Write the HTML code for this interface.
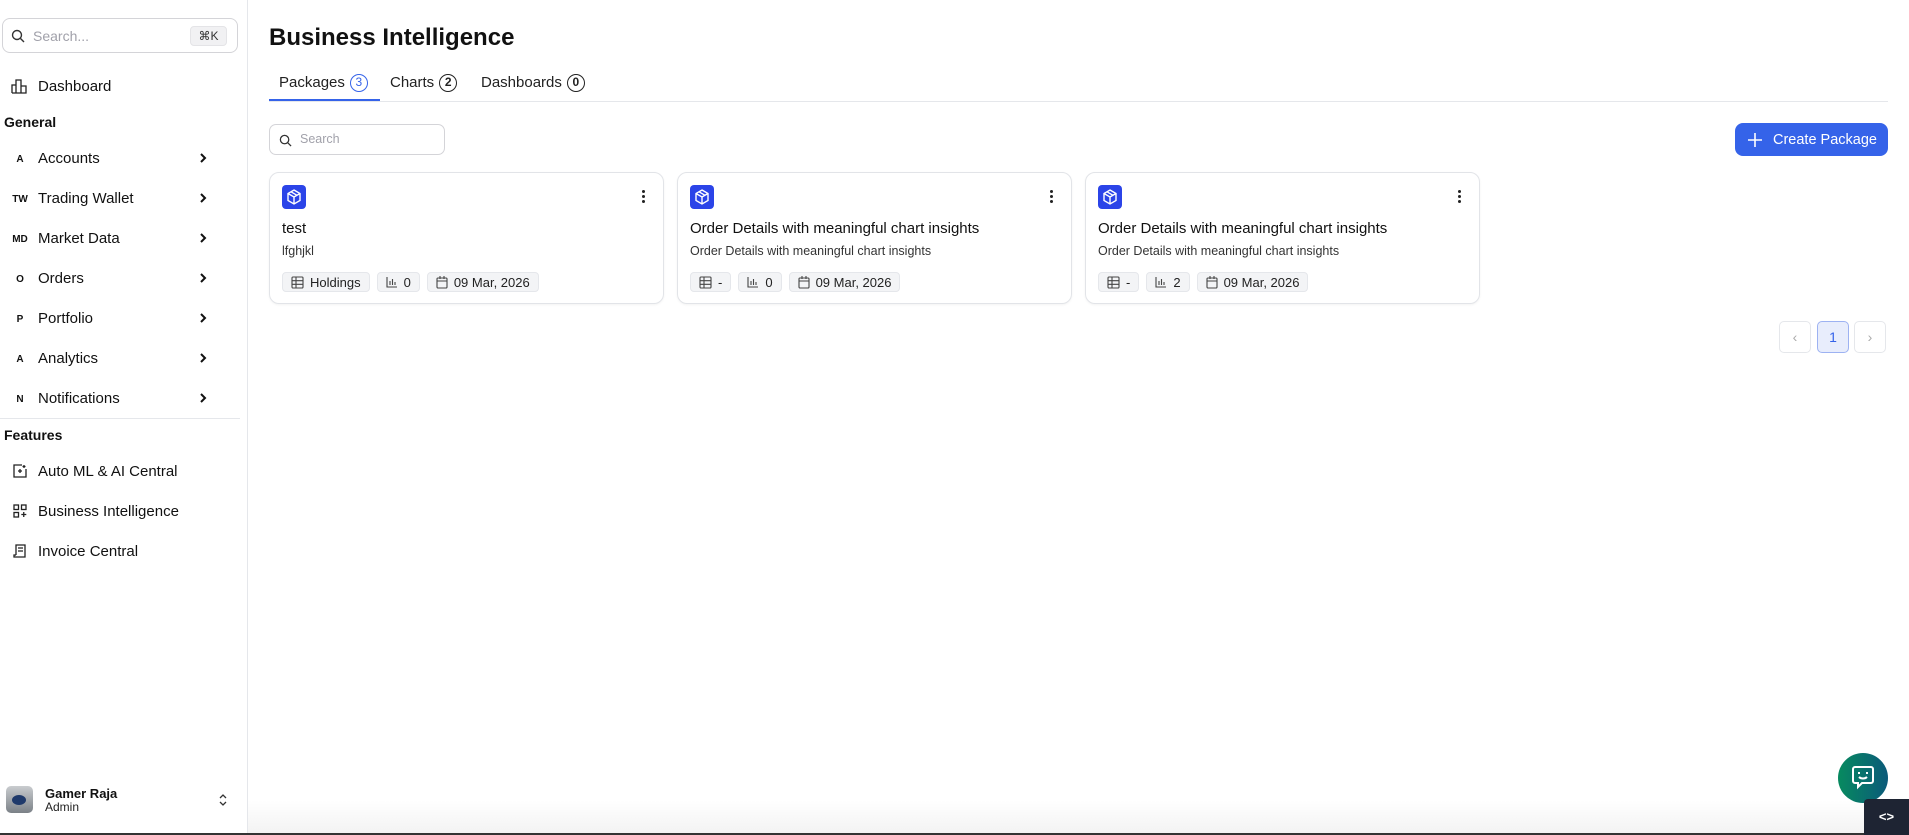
<!DOCTYPE html>
<html><head><meta charset="utf-8"><style>
*{box-sizing:border-box;margin:0;padding:0}
body{width:1909px;height:835px;overflow:hidden;background:#fff;font-family:"Liberation Sans",sans-serif;color:#111;position:relative}
.sb{position:absolute;left:0;top:0;width:248px;height:835px;border-right:1px solid #e5e7eb}
.abs{position:absolute}
.srch{left:2px;top:18px;width:236px;height:35px;border:1px solid #d4d4d8;border-radius:8px}
.kbd{position:absolute;right:10px;top:7px;width:37px;height:20px;background:#f1f1f3;border:1px solid #e4e4e7;border-radius:4px;font-size:12px;color:#333;text-align:center;line-height:18px}
.item{position:absolute;left:0;width:240px;height:30px;font-size:15px;color:#111}
.item .ic{position:absolute;left:10px;top:11px;font-size:10px;font-weight:bold;width:20px;text-align:center}
.item .t{position:absolute;left:38px;top:7px}
.item .ch{position:absolute;left:199px;top:8px}
.hd{position:absolute;left:4px;font-size:14px;font-weight:bold}
.tab{position:absolute;top:74px;font-size:15px;color:#222}
.bdg{display:inline-block;min-width:18px;height:18px;border:1.5px solid #222;border-radius:9px;font-size:12px;text-align:center;line-height:15px;margin-left:5px;font-weight:bold;padding:0 4px;vertical-align:1px}
.card{position:absolute;top:172px;width:395px;height:132px;border:1px solid #e2e4e8;border-radius:10px;box-shadow:0 1px 2px rgba(0,0,0,.05)}
.cic{position:absolute;left:12px;top:12px;width:24px;height:24px;background:#2b44e8;border-radius:4px}
.cic svg{position:absolute;left:4px;top:4px}
.dots{position:absolute;right:18px;top:17px;width:3px}
.dots i{display:block;width:3px;height:3px;background:#222;border-radius:50%;margin-bottom:2px}
.ct{position:absolute;left:12px;top:47px;font-size:15px;font-weight:500;color:#111}
.cs{position:absolute;left:12px;top:71px;font-size:12.5px;color:#333}
.chips{position:absolute;left:12px;top:99px;display:flex;gap:7px}
.chip{height:20px;background:#f3f4f6;border:1px solid #e5e7eb;border-radius:4px;font-size:13px;color:#222;padding:0 8px;display:flex;align-items:center;gap:6px}
.pg{position:absolute;top:321px;width:32px;height:32px;border:1px solid #e5e7eb;border-radius:5px;text-align:center;line-height:30px;color:#aaa;font-size:14px}
</style></head><body>
<div class="sb">
 <div class="abs srch">
  <svg class="abs" style="left:8px;top:10px" width="14" height="14" viewBox="0 0 14 14" fill="none" stroke="#333" stroke-width="1.4"><circle cx="6" cy="6" r="4.5"/><path d="M9.5 9.5L13 13"/></svg>
  <span class="abs" style="left:30px;top:9px;font-size:14px;color:#a1a1aa">Search...</span>
  <div class="kbd">⌘K</div>
 </div>
 <div class="item" style="top:71px"><svg class="abs" style="left:11px;top:8px" width="16" height="15" viewBox="0 0 16 15" fill="none" stroke="#222" stroke-width="1.3"><path d="M1 14V6h4v8M5 14V1h5v13M10 14V7h5v7H1"/></svg><span class="t">Dashboard</span></div>
 <div class="hd" style="top:114px">General</div>
 <div class="item" style="top:143px"><span class="ic">A</span><span class="t">Accounts</span><span class="ch"><svg width="8" height="12" viewBox="0 0 8 12"><path d="M2 2l4 4-4 4" fill="none" stroke="#111" stroke-width="2"/></svg></span></div>
 <div class="item" style="top:183px"><span class="ic">TW</span><span class="t">Trading Wallet</span><span class="ch"><svg width="8" height="12" viewBox="0 0 8 12"><path d="M2 2l4 4-4 4" fill="none" stroke="#111" stroke-width="2"/></svg></span></div>
 <div class="item" style="top:223px"><span class="ic">MD</span><span class="t">Market Data</span><span class="ch"><svg width="8" height="12" viewBox="0 0 8 12"><path d="M2 2l4 4-4 4" fill="none" stroke="#111" stroke-width="2"/></svg></span></div>
 <div class="item" style="top:263px"><span class="ic">O</span><span class="t">Orders</span><span class="ch"><svg width="8" height="12" viewBox="0 0 8 12"><path d="M2 2l4 4-4 4" fill="none" stroke="#111" stroke-width="2"/></svg></span></div>
 <div class="item" style="top:303px"><span class="ic">P</span><span class="t">Portfolio</span><span class="ch"><svg width="8" height="12" viewBox="0 0 8 12"><path d="M2 2l4 4-4 4" fill="none" stroke="#111" stroke-width="2"/></svg></span></div>
 <div class="item" style="top:343px"><span class="ic">A</span><span class="t">Analytics</span><span class="ch"><svg width="8" height="12" viewBox="0 0 8 12"><path d="M2 2l4 4-4 4" fill="none" stroke="#111" stroke-width="2"/></svg></span></div>
 <div class="item" style="top:383px"><span class="ic">N</span><span class="t">Notifications</span><span class="ch"><svg width="8" height="12" viewBox="0 0 8 12"><path d="M2 2l4 4-4 4" fill="none" stroke="#111" stroke-width="2"/></svg></span></div>
 <div class="abs" style="left:0;top:418px;width:240px;border-top:1px solid #e5e7eb"></div>
 <div class="hd" style="top:427px">Features</div>
 <div class="item" style="top:456px"><svg class="abs" style="left:13px;top:8px" width="14" height="14" viewBox="0 0 14 14" fill="none" stroke="#222" stroke-width="1.3"><path d="M9 1H1v12h12V5"/><path d="M7 5v4M5 7h4M11 1v3M9.5 2.5h3"/></svg><span class="t">Auto ML &amp; AI Central</span></div>
 <div class="item" style="top:496px"><svg class="abs" style="left:13px;top:8px" width="14" height="14" viewBox="0 0 14 14" fill="none" stroke="#222" stroke-width="1.3"><rect x="1" y="1" width="4.5" height="4.5"/><rect x="8.5" y="1" width="4.5" height="4.5"/><rect x="1" y="8.5" width="4.5" height="4.5"/><path d="M10.75 8v5M8.3 10.5h5"/></svg><span class="t">Business Intelligence</span></div>
 <div class="item" style="top:536px"><svg class="abs" style="left:13px;top:8px" width="14" height="15" viewBox="0 0 14 15" fill="none" stroke="#222" stroke-width="1.3"><path d="M3 11V1h9v12H1v-2h2M5 4h5M5 7h5"/></svg><span class="t">Invoice Central</span></div>
 <div class="abs" style="left:6px;top:786px;width:27px;height:27px;border-radius:5px;background:linear-gradient(#c9cccf,#7b8187);overflow:hidden"><div style="position:absolute;left:6px;top:9px;width:14px;height:10px;border-radius:50%;background:#1f3a6b"></div></div>
 <div class="abs" style="left:45px;top:786px;font-size:13px;font-weight:bold">Gamer Raja</div>
 <div class="abs" style="left:45px;top:800px;font-size:12px;color:#222">Admin</div>
 <svg class="abs" style="left:218px;top:793px" width="10" height="14" viewBox="0 0 10 14" fill="none" stroke="#333" stroke-width="1.3"><path d="M2 5l3-3 3 3M2 9l3 3 3-3"/></svg>
</div>

<div class="abs" style="left:269px;top:24px;font-size:24px;font-weight:bold">Business Intelligence</div>
<div class="tab" style="left:279px">Packages<span class="bdg" style="border-color:#3563e9;color:#3563e9;font-weight:normal">3</span></div>
<div class="tab" style="left:390px">Charts<span class="bdg">2</span></div>
<div class="tab" style="left:481px">Dashboards<span class="bdg">0</span></div>
<div class="abs" style="left:269px;top:101px;width:1619px;border-top:1px solid #e5e7eb"></div>
<div class="abs" style="left:269px;top:99px;width:111px;height:2px;background:#3563e9"></div>

<div class="abs" style="left:269px;top:124px;width:176px;height:31px;border:1px solid #d4d4d8;border-radius:7px">
 <svg class="abs" style="left:9px;top:9px" width="13" height="13" viewBox="0 0 14 14" fill="none" stroke="#333" stroke-width="1.4"><circle cx="6" cy="6" r="4.5"/><path d="M9.5 9.5L13 13"/></svg>
 <span class="abs" style="left:30px;top:7px;font-size:12.5px;color:#a1a1aa">Search</span>
</div>
<div class="abs" style="left:1735px;top:123px;width:153px;height:33px;background:#3563e9;border-radius:8px;color:#fff;font-size:14.5px">
 <svg class="abs" style="left:13px;top:10px" width="14" height="14" viewBox="0 0 14 14" stroke="#fff" stroke-width="1.6"><path d="M7 0v14M0 7h14"/></svg>
 <span class="abs" style="left:38px;top:9px">Create Package</span>
</div>

<div class="card" style="left:269px">
 <div class="cic"><svg width="16" height="16" viewBox="0 0 16 16" fill="none" stroke="#fff" stroke-width="1.4"><path d="M8 1l6 3.5v7L8 15l-6-3.5v-7z M2 4.5L8 8l6-3.5M8 8v7M5 2.8l6 3.5"/></svg></div>
 <div class="dots"><i></i><i></i><i></i></div>
 <div class="ct">test</div><div class="cs">lfghjkl</div>
 <div class="chips"><div class="chip"><svg width="13" height="13" viewBox="0 0 13 13" fill="none" stroke="#444" stroke-width="1.1"><rect x="1" y="1" width="11" height="11" rx="1"/><path d="M1 4.7h11M1 8.3h11M5 1v11"/></svg>Holdings</div><div class="chip"><svg width="12" height="12" viewBox="0 0 12 12" fill="none" stroke="#444" stroke-width="1.1"><path d="M1 1v10h10M4 9V5M6.5 9V3M9 9V6"/></svg>0</div><div class="chip"><svg width="12" height="13" viewBox="0 0 12 13" fill="none" stroke="#444" stroke-width="1.1"><rect x="1" y="2" width="10" height="10" rx="1"/><path d="M1 5h10M4 0v3M8 0v3"/></svg>09 Mar, 2026</div></div>
</div>
<div class="card" style="left:677px">
 <div class="cic"><svg width="16" height="16" viewBox="0 0 16 16" fill="none" stroke="#fff" stroke-width="1.4"><path d="M8 1l6 3.5v7L8 15l-6-3.5v-7z M2 4.5L8 8l6-3.5M8 8v7M5 2.8l6 3.5"/></svg></div>
 <div class="dots"><i></i><i></i><i></i></div>
 <div class="ct">Order Details with meaningful chart insights</div><div class="cs">Order Details with meaningful chart insights</div>
 <div class="chips"><div class="chip"><svg width="13" height="13" viewBox="0 0 13 13" fill="none" stroke="#444" stroke-width="1.1"><rect x="1" y="1" width="11" height="11" rx="1"/><path d="M1 4.7h11M1 8.3h11M5 1v11"/></svg>-</div><div class="chip"><svg width="12" height="12" viewBox="0 0 12 12" fill="none" stroke="#444" stroke-width="1.1"><path d="M1 1v10h10M4 9V5M6.5 9V3M9 9V6"/></svg>0</div><div class="chip"><svg width="12" height="13" viewBox="0 0 12 13" fill="none" stroke="#444" stroke-width="1.1"><rect x="1" y="2" width="10" height="10" rx="1"/><path d="M1 5h10M4 0v3M8 0v3"/></svg>09 Mar, 2026</div></div>
</div>
<div class="card" style="left:1085px">
 <div class="cic"><svg width="16" height="16" viewBox="0 0 16 16" fill="none" stroke="#fff" stroke-width="1.4"><path d="M8 1l6 3.5v7L8 15l-6-3.5v-7z M2 4.5L8 8l6-3.5M8 8v7M5 2.8l6 3.5"/></svg></div>
 <div class="dots"><i></i><i></i><i></i></div>
 <div class="ct">Order Details with meaningful chart insights</div><div class="cs">Order Details with meaningful chart insights</div>
 <div class="chips"><div class="chip"><svg width="13" height="13" viewBox="0 0 13 13" fill="none" stroke="#444" stroke-width="1.1"><rect x="1" y="1" width="11" height="11" rx="1"/><path d="M1 4.7h11M1 8.3h11M5 1v11"/></svg>-</div><div class="chip"><svg width="12" height="12" viewBox="0 0 12 12" fill="none" stroke="#444" stroke-width="1.1"><path d="M1 1v10h10M4 9V5M6.5 9V3M9 9V6"/></svg>2</div><div class="chip"><svg width="12" height="13" viewBox="0 0 12 13" fill="none" stroke="#444" stroke-width="1.1"><rect x="1" y="2" width="10" height="10" rx="1"/><path d="M1 5h10M4 0v3M8 0v3"/></svg>09 Mar, 2026</div></div>
</div>

<div class="pg" style="left:1779px">‹</div>
<div class="pg" style="left:1817px;background:#e8edfc;border-color:#9db2f2;color:#3563e9">1</div>
<div class="pg" style="left:1854px">›</div>

<div class="abs" style="left:248px;top:800px;width:1661px;height:35px;background:linear-gradient(rgba(0,0,0,0),rgba(0,0,0,.05))"></div>
<div class="abs" style="left:0;top:833px;width:1909px;height:2px;background:#333"></div>
<div class="abs" style="left:1838px;top:753px;width:50px;height:50px;border-radius:50%;background:linear-gradient(90deg,#078a5f,#0b5a7a)">
 <svg class="abs" style="left:13px;top:12px" width="24" height="25" viewBox="0 0 24 25" fill="none" stroke="#fff" stroke-width="2"><path d="M4 2h16a2 2 0 0 1 2 2v12a2 2 0 0 1-2 2h-9l-4 4v-4H4a2 2 0 0 1-2-2V4a2 2 0 0 1 2-2z"/><path d="M8 7v2M16 7v2M8 12c2 2 6 2 8 0"/></svg>
</div>
<div class="abs" style="left:1864px;top:799px;width:45px;height:36px;background:#1e2433;border-radius:4px 0 0 0;color:#fff;font-size:13px;text-align:center;line-height:36px;font-weight:bold">&lt;&gt;</div>
</body></html>
